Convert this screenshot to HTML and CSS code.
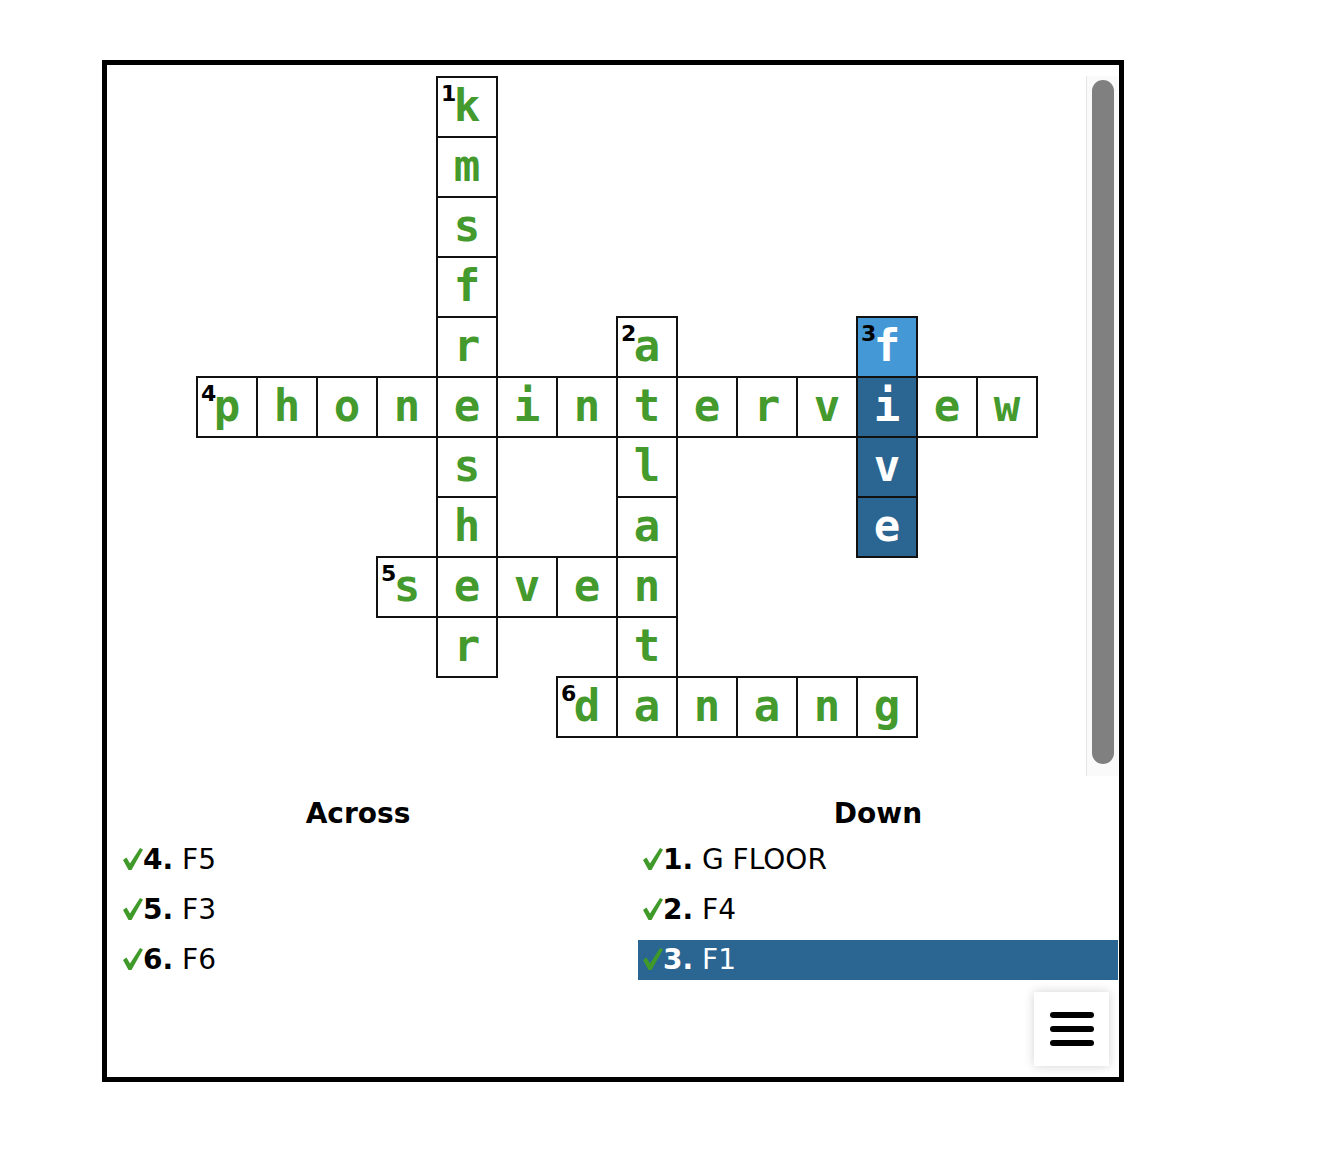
FILE: index.html
```html
<!DOCTYPE html>
<html>
<head>
<meta charset="utf-8">
<link rel="stylesheet" href="styles.css">
</head>
<body>
<div class="puzzle">
  <div class="board">
    <div class="grid-wrap">
      <div class="grid">
        <div class="cell" style="grid-area:1/5"><span class="num">1</span>k</div>
        <div class="cell" style="grid-area:2/5">m</div>
        <div class="cell" style="grid-area:3/5">s</div>
        <div class="cell" style="grid-area:4/5">f</div>
        <div class="cell" style="grid-area:5/5">r</div>
        <div class="cell" style="grid-area:5/8"><span class="num">2</span>a</div>
        <div class="cell active" style="grid-area:5/12"><span class="num">3</span>f</div>
        <div class="cell" style="grid-area:6/1"><span class="num">4</span>p</div>
        <div class="cell" style="grid-area:6/2">h</div>
        <div class="cell" style="grid-area:6/3">o</div>
        <div class="cell" style="grid-area:6/4">n</div>
        <div class="cell" style="grid-area:6/5">e</div>
        <div class="cell" style="grid-area:6/6">i</div>
        <div class="cell" style="grid-area:6/7">n</div>
        <div class="cell" style="grid-area:6/8">t</div>
        <div class="cell" style="grid-area:6/9">e</div>
        <div class="cell" style="grid-area:6/10">r</div>
        <div class="cell" style="grid-area:6/11">v</div>
        <div class="cell word" style="grid-area:6/12">i</div>
        <div class="cell" style="grid-area:6/13">e</div>
        <div class="cell" style="grid-area:6/14">w</div>
        <div class="cell" style="grid-area:7/5">s</div>
        <div class="cell" style="grid-area:7/8">l</div>
        <div class="cell word" style="grid-area:7/12">v</div>
        <div class="cell" style="grid-area:8/5">h</div>
        <div class="cell" style="grid-area:8/8">a</div>
        <div class="cell word" style="grid-area:8/12">e</div>
        <div class="cell" style="grid-area:9/4"><span class="num">5</span>s</div>
        <div class="cell" style="grid-area:9/5">e</div>
        <div class="cell" style="grid-area:9/6">v</div>
        <div class="cell" style="grid-area:9/7">e</div>
        <div class="cell" style="grid-area:9/8">n</div>
        <div class="cell" style="grid-area:10/5">r</div>
        <div class="cell" style="grid-area:10/8">t</div>
        <div class="cell" style="grid-area:11/7"><span class="num">6</span>d</div>
        <div class="cell" style="grid-area:11/8">a</div>
        <div class="cell" style="grid-area:11/9">n</div>
        <div class="cell" style="grid-area:11/10">a</div>
        <div class="cell" style="grid-area:11/11">n</div>
        <div class="cell" style="grid-area:11/12">g</div>
      </div>
    </div>
    <div class="track"><div class="thumb"></div></div>
  </div>
  <div class="clues">
    <div class="col">
      <div class="heading">Across</div>
      <div class="clue"><svg class="check" viewBox="0 0 20 22"><polygon points="0,12 3.5,9.5 7,15.5 17,0 20,1.5 8.5,22 5.5,22"/></svg><b>4.</b> F5</div>
      <div class="clue"><svg class="check" viewBox="0 0 20 22"><polygon points="0,12 3.5,9.5 7,15.5 17,0 20,1.5 8.5,22 5.5,22"/></svg><b>5.</b> F3</div>
      <div class="clue"><svg class="check" viewBox="0 0 20 22"><polygon points="0,12 3.5,9.5 7,15.5 17,0 20,1.5 8.5,22 5.5,22"/></svg><b>6.</b> F6</div>
    </div>
    <div class="col">
      <div class="heading">Down</div>
      <div class="clue"><svg class="check" viewBox="0 0 20 22"><polygon points="0,12 3.5,9.5 7,15.5 17,0 20,1.5 8.5,22 5.5,22"/></svg><b>1.</b> G FLOOR</div>
      <div class="clue"><svg class="check" viewBox="0 0 20 22"><polygon points="0,12 3.5,9.5 7,15.5 17,0 20,1.5 8.5,22 5.5,22"/></svg><b>2.</b> F4</div>
      <div class="clue selected"><svg class="check" viewBox="0 0 20 22"><polygon points="0,12 3.5,9.5 7,15.5 17,0 20,1.5 8.5,22 5.5,22"/></svg><b>3.</b> F1</div>
    </div>
  </div>
  <button class="menu" type="button" aria-label="Menu">
    <span class="bar"></span><span class="bar"></span><span class="bar"></span>
  </button>
</div>
</body>
</html>
```

FILE: styles.css
```css
html, body {
  margin: 0;
  padding: 0;
  background: #fff;
}

body {
  padding: 60px 0 0 102px;
  font-family: "DejaVu Sans", Verdana, sans-serif;
}

.puzzle {
  position: relative;
  box-sizing: border-box;
  width: 1022px;
  height: 1022px;
  border: 5px solid #000;
  padding: 11px 1px 0 11px;
}

.board {
  display: flex;
  height: 700px;
}

.grid-wrap {
  flex: 1;
  padding: 1px 0 0 79px;
}

.grid {
  display: grid;
  grid-template-columns: repeat(14, 60px);
  grid-template-rows: repeat(11, 60px);
}

.cell {
  position: relative;
  box-sizing: border-box;
  width: 62px;
  height: 62px;
  margin: -1px 0 0 -1px;
  border: 2px solid #111;
  background: #fff;
  color: #449a2c;
  font-family: "DejaVu Sans Mono", monospace;
  font-weight: bold;
  font-size: 44px;
  line-height: 56px;
  text-align: center;
}

.cell.active {
  background: #4598d6;
  color: #fff;
}

.cell.word {
  background: #2b6591;
  color: #fff;
}

.num {
  position: absolute;
  top: 5px;
  left: 3px;
  font-family: "DejaVu Sans", sans-serif;
  font-size: 22px;
  line-height: 22px;
  color: #000;
}

.track {
  box-sizing: border-box;
  width: 32px;
  border-left: 1px solid #e6e6e6;
  background: #fafafa;
  padding: 4px 5px 12px 5px;
}

.thumb {
  height: 100%;
  width: 22px;
  border-radius: 11px;
  background: #808080;
}

.clues {
  display: flex;
  gap: 40px;
  margin-top: 18px;
}

.col {
  width: 480px;
  display: flex;
  flex-direction: column;
  gap: 10px;
}

.heading {
  text-align: center;
  font-weight: bold;
  font-size: 28px;
  line-height: 40px;
  margin-bottom: -4px;
}

.clue {
  height: 40px;
  line-height: 40px;
  font-size: 28px;
  padding-left: 5px;
  color: #000;
  white-space: nowrap;
}

.clue b {
  font-weight: bold;
}

.check {
  display: inline-block;
  width: 20px;
  height: 22px;
  margin-top: 8px;
  vertical-align: top;
  fill: #3f9a2a;
}

.clue.selected {
  background: #2b6591;
  color: #fff;
}

.menu {
  position: absolute;
  right: 10px;
  bottom: 11px;
  width: 75px;
  height: 74px;
  border: none;
  background: #fff;
  box-shadow: 0 0 10px rgba(0, 0, 0, 0.18);
  display: flex;
  flex-direction: column;
  align-items: center;
  justify-content: center;
  gap: 8px;
  padding: 0;
}

.bar {
  display: block;
  width: 44px;
  height: 6px;
  border-radius: 3px;
  background: #000;
}
```
